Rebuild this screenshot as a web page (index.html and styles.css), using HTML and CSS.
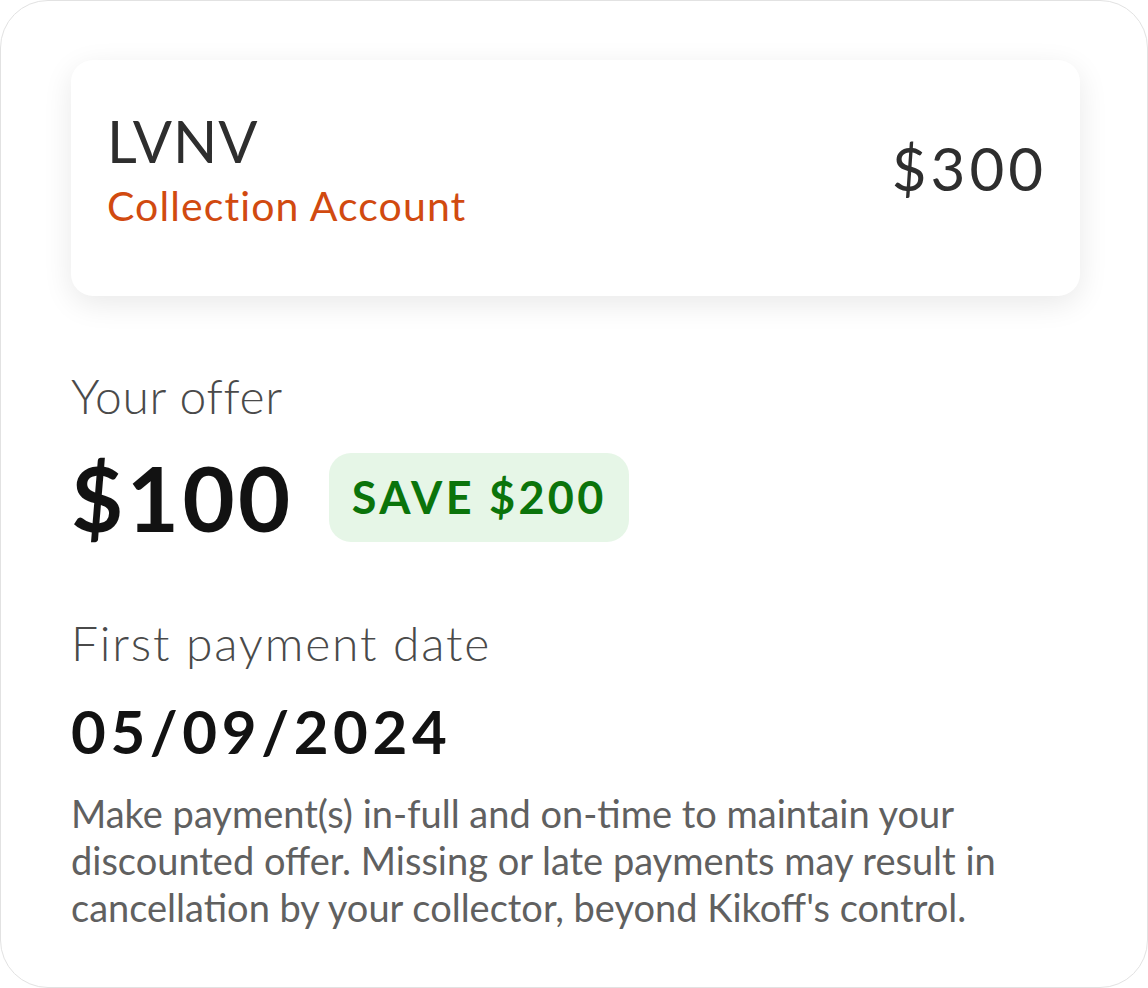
FILE: index.html
```html
<!DOCTYPE html>
<html>
<head>
<meta charset="utf-8">
<link rel="stylesheet" href="styles.css">
</head>
<body>
<div class="frame">
  <div class="card">
    <div class="card-left">
      <div class="creditor">LVNV</div>
      <div class="acct-type">Collection Account</div>
    </div>
    <div class="balance">$300</div>
  </div>
  <div class="label offer-label">Your offer</div>
  <div class="offer-row">
    <div class="offer-amount">$100</div>
    <div class="save-badge">SAVE $200</div>
  </div>
  <div class="label date-label">First payment date</div>
  <div class="date-value">05/09/2024</div>
  <p class="note">Make payment(s) in-full and on-time to maintain your discounted offer. Missing or late payments may result in cancellation by your collector, beyond Kikoff's control.</p>
</div>
</body>
</html>
```
FILE: styles.css
```css
html, body {
  margin: 0;
  padding: 0;
  background: #ffffff;
}
body {
  width: 1148px;
  height: 988px;
  overflow: hidden;
  font-family: "Lato", "Open Sans", sans-serif;
}
.frame {
  box-sizing: border-box;
  width: 1148px;
  height: 988px;
  border: 1px solid #e2e2e2;
  border-radius: 48px;
  background: #ffffff;
  padding: 59px 67px 0 70px;
}
.card {
  height: 236px;
  box-sizing: border-box;
  background: #fff;
  border-radius: 22px;
  box-shadow: 0 8px 30px rgba(0, 0, 0, 0.09);
  display: flex;
  align-items: flex-start;
  justify-content: space-between;
  padding: 49px 37px 0 36px;
}
.creditor {
  font-size: 58px;
  font-weight: 400;
  color: #2e2e2e;
  line-height: 64px;
  letter-spacing: 1px;
}
.acct-type {
  font-size: 41px;
  font-weight: 400;
  color: #d14a10;
  line-height: 52px;
  letter-spacing: 1.1px;
  margin-top: 7px;
}
.balance {
  font-size: 60px;
  line-height: 60px;
  color: #2e2e2e;
  margin-top: 29px;
  letter-spacing: 4px;
  margin-right: -4px;
}
.label {
  font-size: 48px;
  font-weight: 300;
  color: #4a4a4a;
}
.offer-label {
  margin-top: 72px;
  line-height: 56px;
  letter-spacing: 0.6px;
}
.offer-row {
  display: flex;
  align-items: center;
  gap: 38px;
  margin-top: 28px;
}
.offer-amount {
  font-size: 90px;
  font-weight: 700;
  color: #121212;
  line-height: 90px;
  letter-spacing: 3.5px;
  margin-right: -3px;
}
.save-badge {
  background: #e6f6e7;
  color: #0b740b;
  font-size: 45px;
  font-weight: 700;
  border-radius: 22px;
  height: 89px;
  display: flex;
  align-items: center;
  padding: 0 22px 0 23px;
  letter-spacing: 3.3px;
}
.date-label {
  margin-top: 73px;
  line-height: 56px;
  letter-spacing: 1.8px;
}
.date-value {
  font-size: 60px;
  font-weight: 700;
  color: #121212;
  letter-spacing: 4.6px;
  margin-top: 27px;
  line-height: 66px;
}
.note {
  margin: 26px 0 0 0;
  font-size: 38px;
  line-height: 47px;
  color: #606060;
  width: 980px;
}
```
